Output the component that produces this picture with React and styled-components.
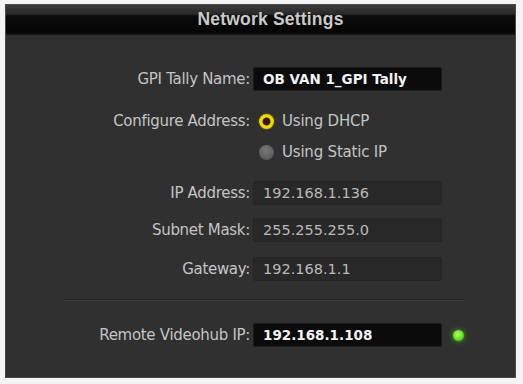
import React from "react";
import styled, { createGlobalStyle } from "styled-components";

const GlobalStyle = createGlobalStyle`
  html, body {
    margin: 0;
    padding: 0;
    background: #f4f4f4;
  }
  body {
    font-family: "DejaVu Sans", "Liberation Sans", sans-serif;
  }
`;

const Panel = styled.div`
  margin: 4px 0 0 5px;
  width: 511px;
  height: 374px;
  background: #303030;
  border: 1px solid #4a4a4a;
  box-sizing: border-box;
  display: flex;
  flex-direction: column;
`;

const Header = styled.div`
  height: 30px;
  display: flex;
  align-items: center;
  justify-content: center;
  padding-left: 20px;
  background: linear-gradient(
    to bottom,
    #3a3a3a 0%,
    #2a2a2a 30%,
    #0c0c0c 36%,
    #050505 90%,
    #1a1a1a 100%
  );
  color: #c9c9c9;
  font-family: "Liberation Sans", Arial, sans-serif;
  font-weight: bold;
  font-size: 17.5px;
  letter-spacing: 0.2px;
`;

const Title = styled.span`
  position: relative;
  top: -1px;
`;

const Form = styled.div`
  display: flex;
  flex-direction: column;
  padding-top: 32px;
`;

const Row = styled.div`
  display: flex;
  align-items: center;
  height: ${(p) => p.$h || 24}px;
  margin-top: ${(p) => p.$top || 0}px;
`;

const Label = styled.div`
  width: 247px;
  text-align: right;
  padding-right: 3px;
  box-sizing: border-box;
  color: #c4c4c4;
  font-size: 15px;
  letter-spacing: -0.3px;
  white-space: nowrap;
`;

const Field = styled.div`
  width: 189px;
  height: 24px;
  box-sizing: border-box;
  display: flex;
  align-items: center;
  padding-left: 9px;
  font-size: ${(p) => (p.$active ? "13.5px" : "14.5px")};
  background: ${(p) => (p.$active ? "#0b0b0b" : "#282828")};
  border: 1px solid ${(p) => (p.$active ? "#1c1c1c" : "#242424")};
  color: ${(p) => (p.$active ? "#f2f2f2" : "#b9b9b9")};
  font-weight: ${(p) => (p.$active ? "bold" : "normal")};
  border-radius: 2px;
`;

const Radio = styled.span`
  width: 15px;
  height: 15px;
  border-radius: 50%;
  box-sizing: border-box;
  margin: 0 8px 0 6px;
  background: ${(p) =>
    p.$on
      ? "radial-gradient(circle, #3a1208 0 3px, #4a2a0a 3.5px, #f2dc00 4.5px, #e6cc00 100%)"
      : "radial-gradient(circle at 45% 35%, #7a7a7a 0, #5a5a5a 70%, #4a4a4a 100%)"};
  box-shadow: ${(p) => (p.$on ? "0 0 2px rgba(240,220,0,0.5)" : "none")};
`;

const Option = styled.span`
  color: #c4c4c4;
  font-size: 15px;
  letter-spacing: -0.2px;
`;

const Divider = styled.div`
  margin: 18px 52px 0 57px;
  height: 1px;
  background: #232323;
  border-bottom: 1px solid #3a3a3a;
`;

const Led = styled.span`
  width: 11px;
  height: 11px;
  border-radius: 50%;
  margin-left: 11px;
  background: radial-gradient(circle at 45% 40%, #b4ff6a 0, #62e01c 55%, #3a9a10 100%);
  box-shadow: 0 0 5px rgba(110, 240, 40, 0.7);
`;

export default function App() {
  return (
    <>
      <GlobalStyle />
      <Panel>
        <Header>
          <Title>Network Settings</Title>
        </Header>
        <Form>
          <Row>
            <Label>GPI Tally Name:</Label>
            <Field $active>OB VAN 1_GPI Tally</Field>
          </Row>
          <Row $h={20} $top={20}>
            <Label>Configure Address:</Label>
            <Radio $on />
            <Option>Using DHCP</Option>
          </Row>
          <Row $h={20} $top={11}>
            <Label />
            <Radio />
            <Option>Using Static IP</Option>
          </Row>
          <Row $top={19}>
            <Label>IP Address:</Label>
            <Field>192.168.1.136</Field>
          </Row>
          <Row $top={13}>
            <Label>Subnet Mask:</Label>
            <Field>255.255.255.0</Field>
          </Row>
          <Row $top={15}>
            <Label>Gateway:</Label>
            <Field>192.168.1.1</Field>
          </Row>
          <Divider />
          <Row $top={22}>
            <Label>Remote Videohub IP:</Label>
            <Field $active>192.168.1.108</Field>
            <Led />
          </Row>
        </Form>
      </Panel>
    </>
  );
}
